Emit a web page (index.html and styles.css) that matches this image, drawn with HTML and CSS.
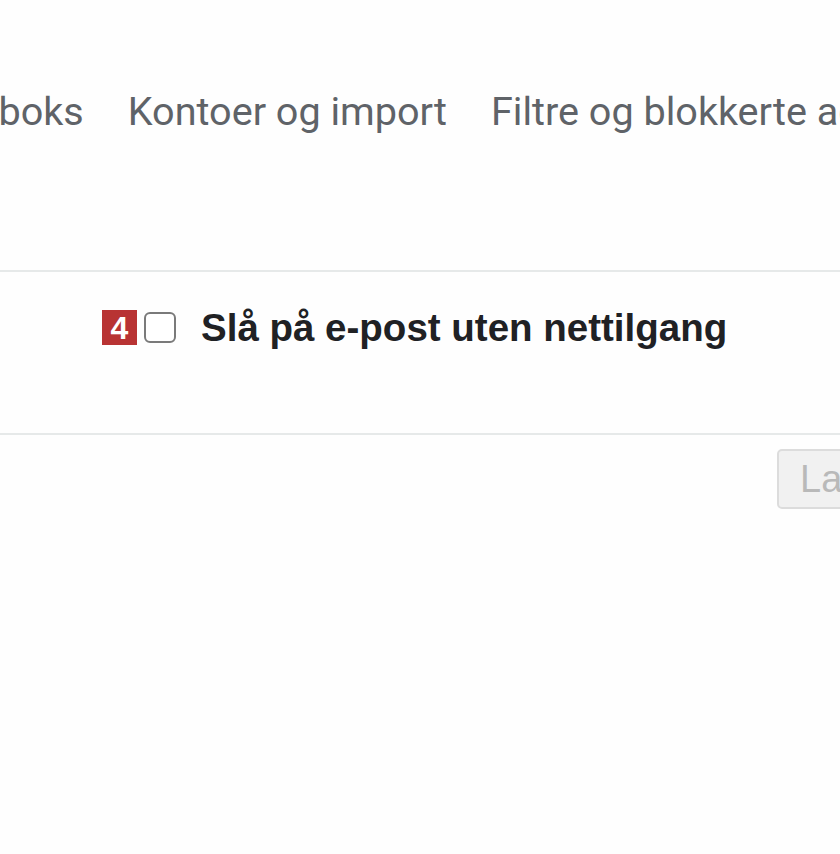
FILE: index.html
```html
<!DOCTYPE html>
<html lang="no">
<head>
<meta charset="utf-8">
<title>Innstillinger</title>
<link rel="stylesheet" href="styles.css">
</head>
<body>
<div class="page">
  <nav class="tabs">
    <span class="tab">Innboks</span>
    <span class="tab">Kontoer og import</span>
    <span class="tab">Filtre og blokkerte adresser</span>
  </nav>
  <div class="divider"></div>
  <div class="setting">
    <span class="badge">4</span>
    <label class="option">
      <span class="box"></span>
      <span class="label">Slå på e-post uten nettilgang</span>
    </label>
  </div>
  <div class="divider divider-bottom"></div>
  <div class="actions">
    <button class="btn" disabled>Lagre endringer</button>
  </div>
</div>
</body>
</html>
```
FILE: styles.css
```css
html, body {
  margin: 0;
  padding: 0;
  background: #fefefe;
  overflow: hidden;
  width: 840px;
  height: 854px;
}
.page {
  width: 840px;
  height: 854px;
  overflow: hidden;
}
.tabs {
  display: flex;
  gap: 44px;
  white-space: nowrap;
  margin-left: -56px;
  padding-top: 86px;
  font-family: Roboto, "Liberation Sans", sans-serif;
  font-size: 39.6px;
  line-height: 52px;
  color: #5f6368;
}
.tab { flex: none; }
.divider {
  margin-top: 132px;
  height: 2px;
  background: #e6e9e9;
  width: 840px;
}
.setting {
  box-sizing: border-box;
  display: flex;
  align-items: flex-start;
  padding-left: 102px;
  padding-top: 38px;
  height: 161px;
}
.badge {
  flex: none;
  width: 35px;
  height: 35px;
  background: #b83333;
  color: #fff;
  font-family: "Liberation Sans", Arial, sans-serif;
  font-weight: bold;
  font-size: 32px;
  line-height: 36px;
  text-align: center;
}
.option {
  display: flex;
  align-items: center;
  margin-left: 7px;
  height: 35px;
}
.box {
  flex: none;
  width: 28px;
  height: 27px;
  border: 2px solid #7a7a7a;
  border-radius: 6px;
  background: #fff;
}
.label {
  margin-left: 25px;
  font-family: "Liberation Sans", Arial, sans-serif;
  font-weight: bold;
  font-size: 38.5px;
  line-height: 35px;
  color: #202124;
  white-space: nowrap;
}
.divider-bottom {
  margin-top: 0;
}
.actions {
  display: flex;
  padding-left: 777px;
  padding-top: 14px;
}
.btn {
  flex: none;
  height: 60px;
  padding: 0 21px;
  background: #f1f1f1;
  border: 2px solid #dcdcdc;
  border-radius: 5px;
  font-family: "Liberation Sans", Arial, sans-serif;
  font-size: 38px;
  color: #b9b9b9;
  white-space: nowrap;
}
```
